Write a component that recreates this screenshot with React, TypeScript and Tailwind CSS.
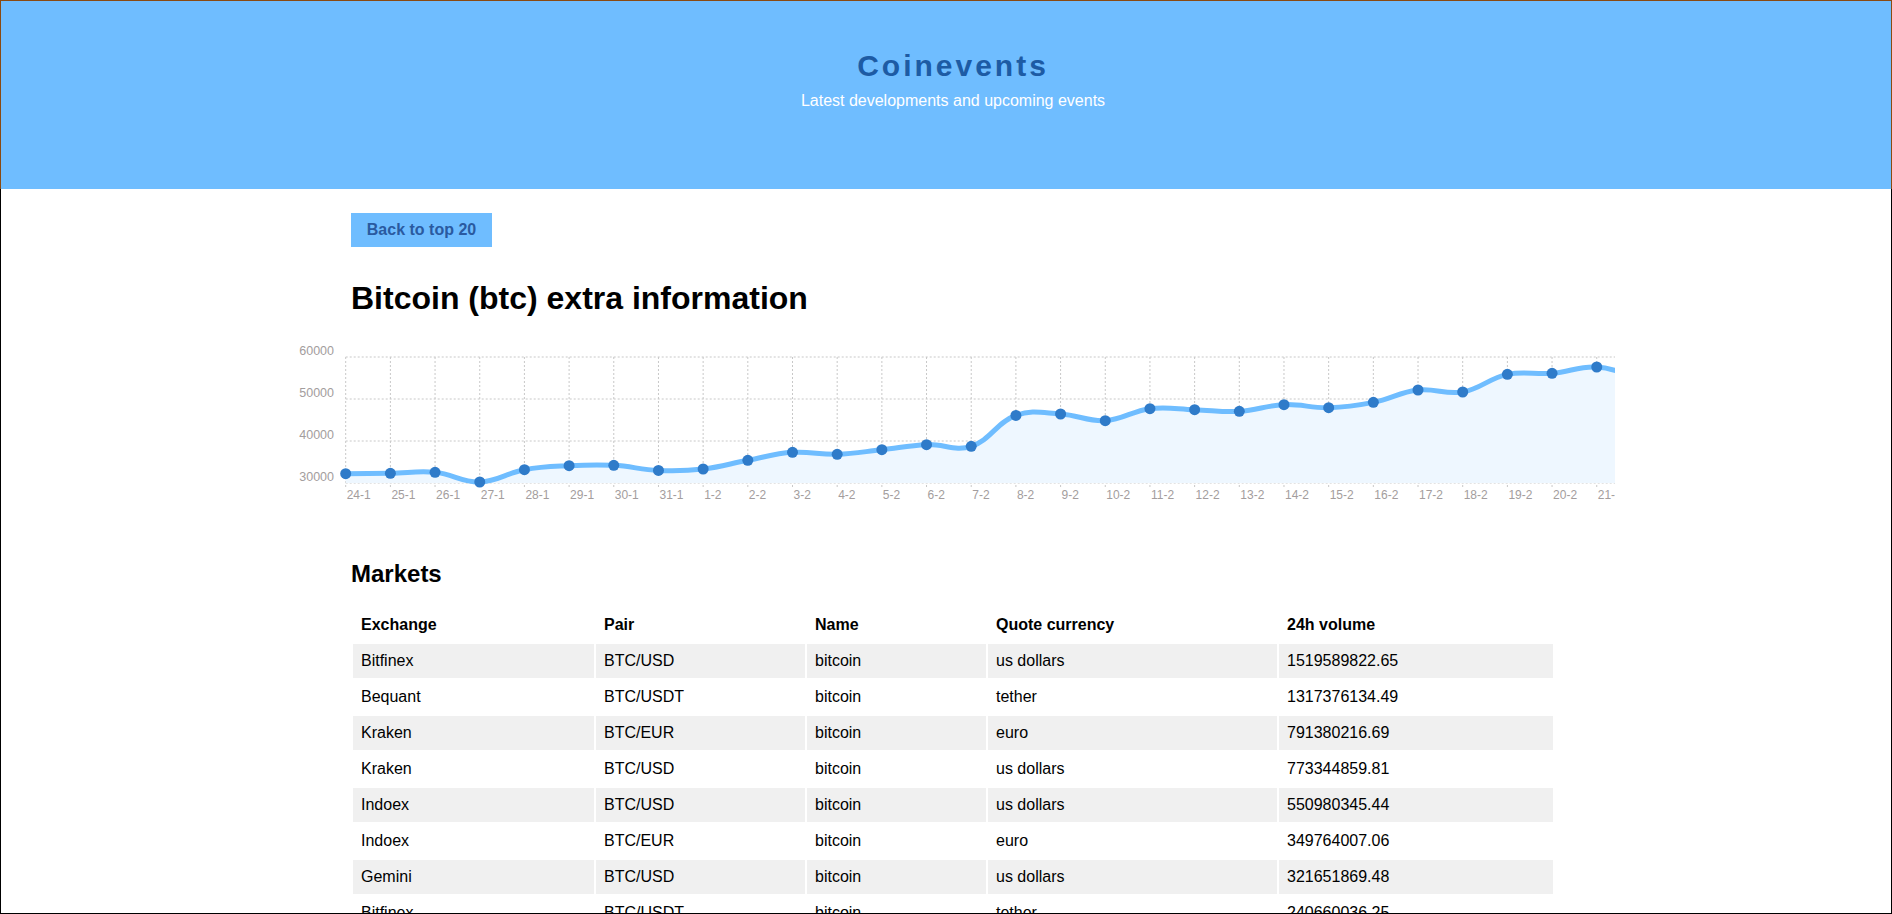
import React from "react";

const prices = [
	32214, 32300, 32540, 30240, 33170, 34120, 34200, 33000, 33330, 35400, 37300,
	36830, 37930, 39130, 38730, 46100, 46430, 44840, 47700, 47460, 47060, 48650,
	47930, 49200, 52140, 51670, 55870, 56110, 57620, 54800,
];

const labels = [
	"24-1", "25-1", "26-1", "27-1", "28-1", "29-1", "30-1", "31-1", "1-2", "2-2",
	"3-2", "4-2", "5-2", "6-2", "7-2", "8-2", "9-2", "10-2", "11-2", "12-2",
	"13-2", "14-2", "15-2", "16-2", "17-2", "18-2", "19-2", "20-2", "21-2", "22-2",
];

const markets = [
	["Bitfinex", "BTC/USD", "bitcoin", "us dollars", "1519589822.65"],
	["Bequant", "BTC/USDT", "bitcoin", "tether", "1317376134.49"],
	["Kraken", "BTC/EUR", "bitcoin", "euro", "791380216.69"],
	["Kraken", "BTC/USD", "bitcoin", "us dollars", "773344859.81"],
	["Indoex", "BTC/USD", "bitcoin", "us dollars", "550980345.44"],
	["Indoex", "BTC/EUR", "bitcoin", "euro", "349764007.06"],
	["Gemini", "BTC/USD", "bitcoin", "us dollars", "321651869.48"],
	["Bitfinex", "BTC/USDT", "bitcoin", "tether", "240660036.25"],
	["Coinbase Pro", "BTC/USD", "bitcoin", "us dollars", "221937402.10"],
	["Bitstamp", "BTC/USD", "bitcoin", "us dollars", "198420317.77"],
];

// chart geometry (svg coords)
const LEFT = 55.7;
const STEP = 44.68;
const TOP = 17;
const BOTTOM = 143;
const yOf = (v: number) => BOTTOM - ((v - 30000) / 10000) * 42;

const PriceChart = () => {
	const pts = prices.map((v, i) => ({ x: LEFT + i * STEP, y: yOf(v) }));

	// chart.js style spline, tension 0.4
	const cps = pts.map((p, i) => {
		const prev = pts[i - 1] || p;
		const next = pts[i + 1] || p;
		const d01 = Math.hypot(p.x - prev.x, p.y - prev.y);
		const d12 = Math.hypot(next.x - p.x, next.y - p.y);
		const tot = d01 + d12 || 1;
		const fa = (0.4 * d01) / tot;
		const fb = (0.4 * d12) / tot;
		return {
			inX: p.x - fa * (next.x - prev.x),
			inY: p.y - fa * (next.y - prev.y),
			outX: p.x + fb * (next.x - prev.x),
			outY: p.y + fb * (next.y - prev.y),
		};
	});

	let line = `M ${pts[0].x} ${pts[0].y}`;
	for (let i = 1; i < pts.length; i++) {
		line += ` C ${cps[i - 1].outX} ${cps[i - 1].outY} ${cps[i].inX} ${cps[i].inY} ${pts[i].x} ${pts[i].y}`;
	}
	const area = `${line} L ${pts[pts.length - 1].x} ${BOTTOM} L ${pts[0].x} ${BOTTOM} Z`;

	return (
		<svg width="1325" height="165" className="-ml-[61px] block" fontFamily="'Liberation Sans', Arial, sans-serif">
			{[60000, 50000, 40000, 30000].map((v) => (
				<g key={v}>
					<line x1={LEFT} x2={1325} y1={yOf(v)} y2={yOf(v)} stroke="#c8c8c8" strokeWidth="1" strokeDasharray="2 2" />
					<text x="44" y={yOf(v) - 2} textAnchor="end" fontSize="12.5" fill="#a39d9d">
						{v}
					</text>
				</g>
			))}
			{pts.map((p, i) => (
				<g key={i}>
					<line x1={p.x} x2={p.x} y1={TOP} y2={BOTTOM + 6} stroke="#c8c8c8" strokeWidth="1" strokeDasharray="2 2" />
					<text x={p.x + 1} y="159" fontSize="12" fill="#a39d9d">
						{labels[i]}
					</text>
				</g>
			))}
			<path d={area} fill="#eef7ff" />
			<path d={line} fill="none" stroke="#6fbdff" strokeWidth="5" strokeLinejoin="round" />
			{pts.map((p, i) => (
				<circle key={i} cx={p.x} cy={p.y} r="5.5" fill="#2f7bc9" />
			))}
		</svg>
	);
};

const App = () => {
	return (
		<div className="flex h-[914px] flex-col overflow-hidden bg-white font-['Liberation_Sans',Arial,sans-serif] text-black">
			<header className="flex h-[189px] shrink-0 flex-col items-center border-x border-t border-[#8a4a12] bg-[#6fbdff] pt-[47px] pl-[14px]">
				<h1 className="text-[30px] leading-[36px] font-bold tracking-[3px] text-[#1d5ba4]">Coinevents</h1>
				<p className="mt-[8px] text-[16px] leading-[18px] text-white">Latest developments and upcoming events</p>
			</header>
			<main className="flex-1 overflow-hidden border-x border-b border-black">
				<div className="ml-[350px] pt-[24px]">
					<button className="flex h-[34px] w-[141px] items-center justify-center bg-[#6fbdff] text-[16px] font-bold text-[#2a5aa0]">
						Back to top 20
					</button>
					<h2 className="mt-[33px] text-[32px] leading-[37px] font-bold">Bitcoin (btc) extra information</h2>
					<div className="mt-[23px]">
						<PriceChart />
					</div>
					<h3 className="mt-[55px] text-[24px] leading-[28px] font-bold">Markets</h3>
					<table className="mt-[18px] w-[1204px] table-fixed border-separate border-spacing-[2px] text-[16px] leading-[18px]">
						<colgroup>
							<col className="w-[241px]" />
							<col className="w-[209px]" />
							<col className="w-[179px]" />
							<col className="w-[289px]" />
							<col className="w-[274px]" />
						</colgroup>
						<thead>
							<tr>
								{["Exchange", "Pair", "Name", "Quote currency", "24h volume"].map((h) => (
									<th key={h} className="h-[34px] px-2 text-left font-bold">
										{h}
									</th>
								))}
							</tr>
						</thead>
						<tbody>
							{markets.map((row, i) => (
								<tr key={i} className={i % 2 === 0 ? "bg-[#f0f0f0]" : "bg-white"}>
									{row.map((c, j) => (
										<td key={j} className="h-[34px] px-2">
											{c}
										</td>
									))}
								</tr>
							))}
						</tbody>
					</table>
				</div>
			</main>
		</div>
	);
};

export default App;
